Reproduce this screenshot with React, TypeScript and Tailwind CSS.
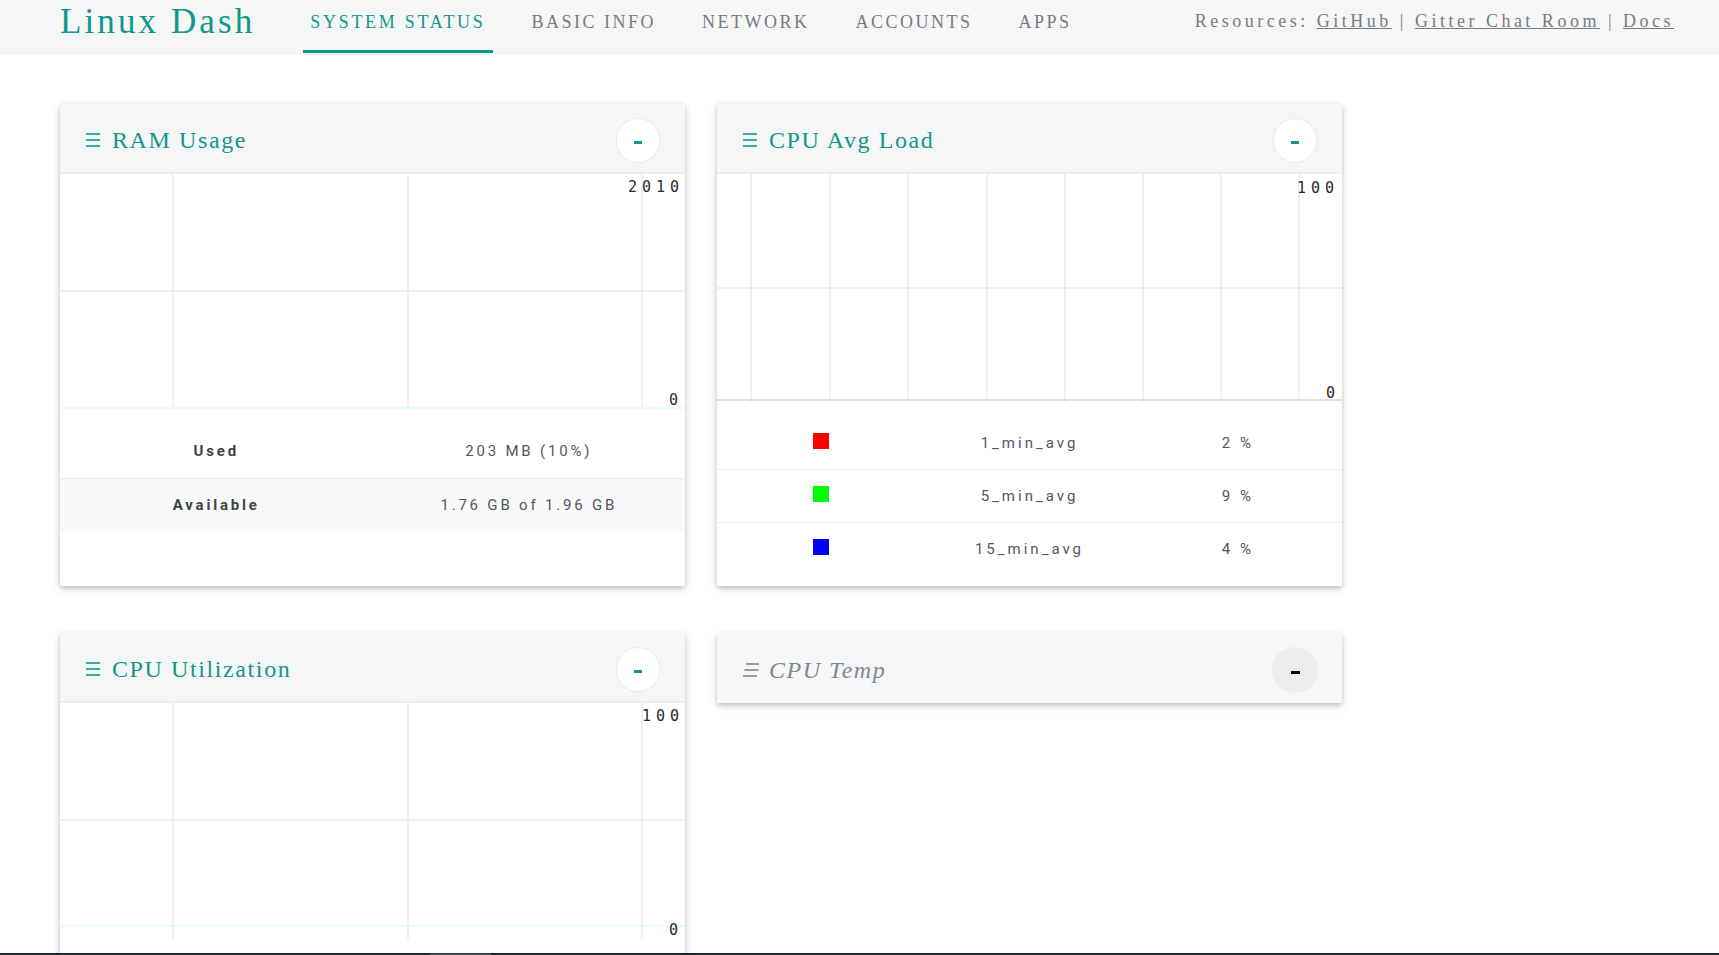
import React from 'react';

const navItems = ['SYSTEM STATUS', 'BASIC INFO', 'NETWORK', 'ACCOUNTS', 'APPS'];

function MenuIcon({ muted = false }: { muted?: boolean }) {
  const color = muted ? '#7d8894' : '#13968b';
  // italic glyph in the muted title: lines drift to the right going up
  const shift = muted ? [3, 1.5, 0] : [0, 0, 0];
  return (
    <svg width="17" height="14" viewBox="0 0 17 14" className="block shrink-0">
      <line x1={1 + shift[0]} y1="1" x2={15 + shift[0]} y2="1" stroke={color} strokeWidth="1.6" />
      <line x1={1 + shift[1]} y1="7" x2={15 + shift[1]} y2="7" stroke={color} strokeWidth="1.6" />
      <line x1={1 + shift[2]} y1="13" x2={15 + shift[2]} y2="13" stroke={color} strokeWidth="1.6" />
    </svg>
  );
}

function CardHeader({ title, muted = false, bordered = true }: { title: string; muted?: boolean; bordered?: boolean }) {
  return (
    <div
      className={
        bordered
          ? 'flex h-[70px] items-center justify-between border-b-2 border-[#ededed] bg-[#f5f6f6] pl-[25px] pr-[25px] pt-[4px]'
          : 'flex h-[70px] items-center justify-between bg-[#f5f6f6] pl-[25px] pr-[24px] pt-[4px]'
      }
    >
      <div className="flex items-center gap-[10px]">
        <MenuIcon muted={muted} />
        <span
          className={
            muted
              ? 'text-[24px] italic leading-none tracking-[1.5px] text-[#7d8894]'
              : 'text-[24px] leading-none tracking-[1.6px] text-[#13968b]'
          }
        >
          {title}
        </span>
      </div>
      {muted ? (
        <button className="flex h-[46px] w-[46px] items-center justify-center rounded-full bg-[#ececec]">
          <span className="mt-[5px] block h-[3px] w-[9px] bg-black" />
        </button>
      ) : (
        <button className="flex h-[45px] w-[44px] items-center justify-center rounded-full border-[1.5px] border-[#ebebeb] bg-white">
          <span className="mt-[5px] block h-[3px] w-[8px] bg-[#13968b]" />
        </button>
      )}
    </div>
  );
}

interface ChartProps {
  height: number;
  xs: number[];
  lineBottom: number;
  mid: number;
  dataY: number;
  dataColor: string;
  top: { x: number; y: number; text: string };
  zero: { x: number; y: number };
}

function Chart({ height, xs, lineBottom, mid, dataY, dataColor, top, zero }: ChartProps) {
  return (
    <svg width="625" height={height} className="block">
      {xs.map((x) => (
        <line key={x} x1={x} y1="0" x2={x} y2={lineBottom} stroke="#ebebeb" strokeWidth="1.5" />
      ))}
      <line x1="0" y1={mid} x2="625" y2={mid} stroke="#ebebeb" strokeWidth="1.5" />
      <line x1="0" y1={dataY} x2="625" y2={dataY} stroke={dataColor} strokeWidth="1.5" />
      <text x={top.x} y={top.y} fontFamily="DejaVu Sans Mono, monospace" fontSize="15" letterSpacing="5" fill="#2a2a2a">
        {top.text}
      </text>
      <text x={zero.x} y={zero.y} fontFamily="DejaVu Sans Mono, monospace" fontSize="15" fill="#2a2a2a">
        0
      </text>
    </svg>
  );
}

const cpuAvg = [
  { color: '#ff0000', name: '1_min_avg', value: '2 %' },
  { color: '#00ff00', name: '5_min_avg', value: '9 %' },
  { color: '#0000ff', name: '15_min_avg', value: '4 %' },
];

const cardShadow = 'shadow-[0_2px_5px_rgba(0,0,0,0.18),0_3px_10px_rgba(0,0,0,0.12)]';

export default function App() {
  return (
    <div className="flex h-[955px] flex-col overflow-hidden bg-white font-['Liberation_Serif',serif]">
      <header className="flex h-[55px] shrink-0 items-start bg-[#f5f6f6]">
        <div className="ml-[60px] mt-[4px] text-[35px] leading-[35px] tracking-[3.1px] text-[#13968b]">Linux Dash</div>
        <nav className="ml-[48px] flex gap-[32px]">
          {navItems.map((item, i) => (
            <div
              key={item}
              className={
                i === 0
                  ? 'h-[53px] border-b-[3px] border-[#0f9488] px-[7px] pt-[13px] text-[18px] leading-[18px] tracking-[2.7px] text-[#13968b]'
                  : 'h-[53px] px-[7px] pt-[13px] text-[18px] leading-[18px] tracking-[2.5px] text-[#7a7a82]'
              }
            >
              {item}
            </div>
          ))}
        </nav>
        <div className="ml-auto mr-[45px] pt-[12px] text-[18px] leading-[18px] tracking-[3.5px] text-[#7a7a82]">
          Resources: <a className="underline">GitHub</a> | <a className="underline">Gitter Chat Room</a> |{' '}
          <a className="underline">Docs</a>
        </div>
      </header>

      <main className="flex-1 overflow-hidden pl-[60px] pt-[49px]">
        <div className="flex items-stretch gap-[32px]">
          <section className={`w-[625px] rounded-[2px] bg-white pb-[55px] ${cardShadow}`}>
            <CardHeader title="RAM Usage" />
            <Chart
              height={235}
              xs={[113, 348, 582]}
              lineBottom={235}
              mid={117}
              dataY={234}
              dataColor="#e4f9f9"
              top={{ x: 568, y: 18, text: '2010' }}
              zero={{ x: 609, y: 231 }}
            />
            <div className="mt-[16px] font-['Roboto',sans-serif] text-[15px] tracking-[2.8px]">
              <div className="flex h-[53px] items-center">
                <div className="w-1/2 text-center font-bold text-[#3f4449]">Used</div>
                <div className="w-1/2 text-center text-[#4f5861]">203 MB (10%)</div>
              </div>
              <div className="flex h-[53px] items-center border-t border-[#ececec] bg-[#f9f9f9]">
                <div className="w-1/2 text-center font-bold text-[#3f4449]">Available</div>
                <div className="w-1/2 text-center text-[#4f5861]">1.76 GB of 1.96 GB</div>
              </div>
            </div>
          </section>

          <section className={`w-[625px] rounded-[2px] bg-white pb-[9px] ${cardShadow}`}>
            <CardHeader title="CPU Avg Load" />
            <Chart
              height={228}
              xs={[34, 113, 191, 270, 348, 426, 504, 582]}
              lineBottom={228}
              mid={114}
              dataY={226}
              dataColor="#f4c8c8"
              top={{ x: 580, y: 19, text: '100' }}
              zero={{ x: 609, y: 224 }}
            />
            <div className="mt-[15px] font-['Roboto',sans-serif] text-[15px] tracking-[3px] text-[#4f5861]">
              {cpuAvg.map((row, i) => (
                <div
                  key={row.name}
                  className={i < 2 ? 'flex h-[53px] items-center border-b border-[#ececec]' : 'flex h-[53px] items-center'}
                >
                  <div className="flex w-1/3 justify-center">
                    <span className="mb-[5px] block h-[16px] w-[16px]" style={{ backgroundColor: row.color }} />
                  </div>
                  <div className="w-1/3 text-center">{row.name}</div>
                  <div className="w-1/3 text-center">{row.value}</div>
                </div>
              ))}
            </div>
          </section>
        </div>

        <div className="mt-[47px] flex items-start gap-[32px]">
          <section className={`w-[625px] rounded-[2px] bg-white ${cardShadow}`}>
            <CardHeader title="CPU Utilization" />
            <Chart
              height={300}
              xs={[113, 348, 582]}
              lineBottom={236}
              mid={117}
              dataY={223}
              dataColor="#e4f9f9"
              top={{ x: 582, y: 18, text: '100' }}
              zero={{ x: 609, y: 232 }}
            />
          </section>

          <section className={`w-[625px] rounded-[2px] bg-[#f5f6f6] ${cardShadow}`}>
            <CardHeader title="CPU Temp" muted bordered={false} />
          </section>
        </div>
      </main>

      <div className="flex h-[2px] shrink-0 bg-[#1d2727]">
        <div className="ml-[430px] w-[61px] bg-[#3d4a4a]" />
      </div>
    </div>
  );
}
